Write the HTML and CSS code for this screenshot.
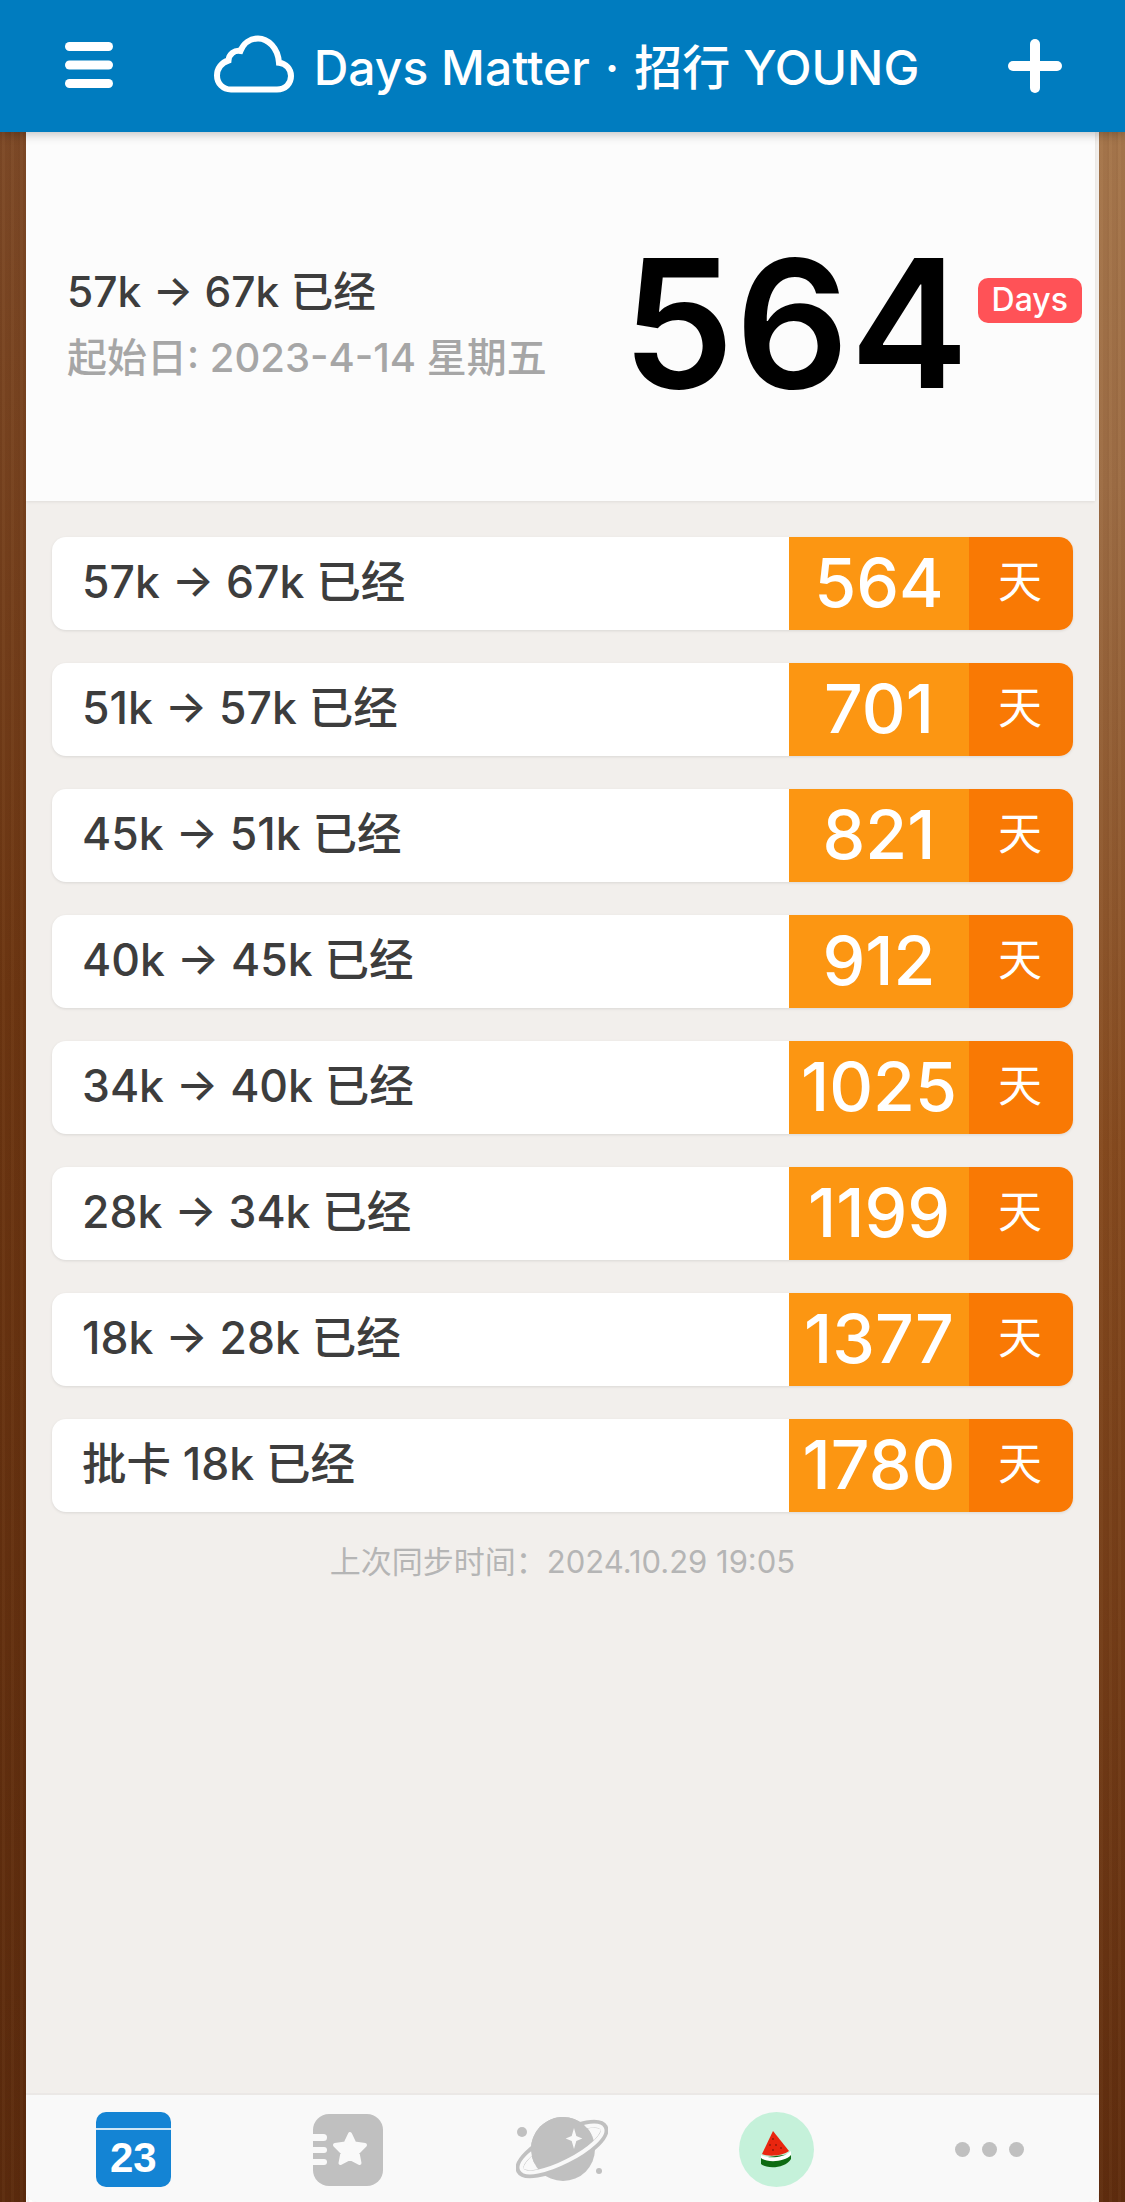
FILE: index.html
```html
<!DOCTYPE html>
<html lang="zh-CN">
<head>
  <meta charset="UTF-8">
  <title>Days Matter</title>
  <link rel="stylesheet" href="styles.css">
</head>
<body>
  <header class="nav">
    <svg class="menu-icon" viewBox="0 0 48 46"><rect x="0" y="0" width="48" height="9" rx="4.5"/><rect x="0" y="18.500" width="48" height="9" rx="4.5"/><rect x="0" y="37" width="48" height="9" rx="4.5"/></svg>
    <div class="nav-title">
      <svg class="cloud-icon" viewBox="0 0 80 58"><path d="M17 54.500h46c8.500 0 14-6 14-13.500 0-7-5-12.500-12-13.300C64 13 54 3.500 44 3.500c-8 0-14.500 5-17.500 12.500-6-1-11.500 3-12 9.500C7.500 27.500 3 33.500 3 40.500 3 48.500 9 54.500 17 54.500z"/></svg>
      <span>Days Matter<span class="nav-dot">·</span>招行 YOUNG</span>
    </div>
    <svg class="plus-icon" viewBox="0 0 54 54"><rect x="22" y="0" width="10" height="54" rx="5"/><rect x="0" y="22" width="54" height="10" rx="5"/></svg>
  </header>

  <main class="sheet">
    <section class="hero">
      <div class="hero-text">
        <div class="hero-title">57k → 67k 已经</div>
        <div class="hero-date">起始日: 2023-4-14 星期五</div>
      </div>
      <div class="hero-count">564</div>
      <div class="hero-badge">Days</div>
    </section>

    <section class="list">
      <div class="row"><div class="row-name">57k → 67k 已经</div><div class="row-num">564</div><div class="row-unit">天</div></div>
      <div class="row"><div class="row-name">51k → 57k 已经</div><div class="row-num">701</div><div class="row-unit">天</div></div>
      <div class="row"><div class="row-name">45k → 51k 已经</div><div class="row-num">821</div><div class="row-unit">天</div></div>
      <div class="row"><div class="row-name">40k → 45k 已经</div><div class="row-num">912</div><div class="row-unit">天</div></div>
      <div class="row"><div class="row-name">34k → 40k 已经</div><div class="row-num">1025</div><div class="row-unit">天</div></div>
      <div class="row"><div class="row-name">28k → 34k 已经</div><div class="row-num">1199</div><div class="row-unit">天</div></div>
      <div class="row"><div class="row-name">18k → 28k 已经</div><div class="row-num">1377</div><div class="row-unit">天</div></div>
      <div class="row"><div class="row-name">批卡 18k 已经</div><div class="row-num">1780</div><div class="row-unit">天</div></div>
      <p class="sync">上次同步时间：2024.10.29 19:05</p>
    </section>

    <nav class="tabs">
      <div class="tab">
        <div class="cal-icon"><span class="cal-num">23</span></div>
      </div>
      <div class="tab">
        <svg class="tab-icon" width="70" height="72" viewBox="0 0 70 72">
          <rect width="70" height="72" rx="16" fill="#c0c0c0"/>
          <rect x="-6" y="20" width="20" height="7" rx="3.5" fill="#f9f9f9"/>
          <rect x="-6" y="33" width="20" height="6" rx="3" fill="#f9f9f9"/>
          <rect x="-6" y="45" width="20" height="6" rx="3" fill="#f9f9f9"/>
          <path d="M37 20l4.500 9.500 10.500 1.500-7.500 7.500 2 10.500-9.500-5-9.500 5 2-10.500-7.500-7.500 10.500-1.500z" fill="#f9f9f9" stroke="#f9f9f9" stroke-width="4" stroke-linejoin="round"/>
        </svg>
      </div>
      <div class="tab">
        <svg class="tab-icon" width="92" height="68" viewBox="0 0 92 68">
          <circle cx="47" cy="33" r="32" fill="#c0c0c0"/>
          <ellipse cx="46" cy="33" rx="47" ry="15" transform="rotate(-27 46 33)" fill="none" stroke="#c0c0c0" stroke-width="8"/>
          <ellipse cx="46" cy="33" rx="45" ry="13" transform="rotate(-27 46 33)" fill="none" stroke="#f9f9f9" stroke-width="4"/>
          <path d="M15 33a32 32 0 0 1 64 0z" transform="rotate(-27 47 33)" fill="#c0c0c0"/>
          <path d="M58 12l2.300 8 6 2.500-6 2.500-2.300 8-2.300-8-6-2.500 6-2.500z" fill="#f9f9f9"/>
          <circle cx="6" cy="16" r="5" fill="#c0c0c0"/>
          <circle cx="83" cy="55" r="3" fill="#c0c0c0"/>
        </svg>
      </div>
      <div class="tab">
        <div class="melon-bg">
          <svg width="32" height="38" viewBox="0 0 32 38">
            <path d="M1 27v6c5 5 24 5 30-5v-5z" fill="#0d6b12"/>
            <path d="M1 24c7 4 23 3 30-4v4c-6 7-24 8-30 3z" fill="#fff"/>
            <path d="M13 0L29 20C23 25 8 26 2 23z" fill="#e9260f"/>
            <g fill="#5a1208"><circle cx="13" cy="8" r=".8"/><circle cx="10" cy="14" r=".8"/><circle cx="16" cy="14" r=".8"/><circle cx="13" cy="19" r=".8"/><circle cx="21" cy="17" r=".8"/></g>
          </svg>
        </div>
      </div>
      <div class="tab">
        <div class="dots"><i></i><i></i><i></i></div>
      </div>
    </nav>
  </main>
</body>
</html>
```

FILE: styles.css
```css
html, body {
  margin: 0;
  padding: 0;
}
body {
  width: 1125px;
  height: 2202px;
  overflow: hidden;
  display: flex;
  flex-direction: column;
  font-family: Inter, "Noto Sans CJK SC", sans-serif;
  background:
    repeating-linear-gradient(90deg, rgba(60,25,5,0.05) 0 2px, rgba(255,220,170,0.03) 2px 5px, rgba(60,25,5,0.02) 5px 9px),
    linear-gradient(180deg, #7f4c2a 0%, #6b3511 45%, #5a2a0d 100%) left top / 26px 100% no-repeat,
    linear-gradient(180deg, #a8794e 0%, #9c6c44 22%, #854a1f 52%, #5e2c0e 100%) right top / 26px 100% no-repeat;
}
.nav {
  height: 132px;
  flex: none;
  position: relative;
  z-index: 2;
  display: flex;
  align-items: center;
  justify-content: space-between;
  padding: 0 63px 0 65px;
  background: #007cbf;
  box-shadow: 0 2px 10px rgba(0,0,0,0.25);
}
.menu-icon {
  width: 48px;
  height: 46px;
  margin-top: -2px;
  fill: #fff;
}
.plus-icon {
  width: 54px;
  height: 54px;
  fill: #fff;
}
.nav-title {
  display: flex;
  align-items: center;
  gap: 20px;
  margin: -4px 0 0 12px;
  color: #fff;
  font-size: 48px;
  font-weight: 500;
  white-space: nowrap;
}
.nav-dot {
  margin: 0 15px;
}
.cloud-icon {
  width: 80px;
  height: 58px;
  fill: none;
  stroke: #fff;
  stroke-width: 6;
}
.sheet {
  flex: 1;
  margin: 0 26px;
  display: flex;
  flex-direction: column;
  background: #f2efec;
  border-radius: 0 0 12px 12px;
  overflow: hidden;
}
.hero {
  height: 369px;
  flex: none;
  display: flex;
  align-items: center;
  margin-right: 4px;
  padding: 0 13px 0 41px;
  background: #fcfcfc;
  box-shadow: 0 1px 3px rgba(0,0,0,0.08);
  box-sizing: border-box;
}
.hero-text {
  flex: 1;
  padding-top: 8px;
}
.hero-title {
  color: #3d3d3d;
  font-size: 42.500px;
  font-weight: 500;
}
.hero-date {
  margin-top: 7px;
  color: #a6a6a6;
  font-size: 40px;
  font-weight: 500;
}
.hero-count {
  padding-top: 14px;
  font-size: 178px;
  font-weight: 600;
  letter-spacing: 1px;
  color: #000;
  line-height: 1;
}
.hero-badge {
  align-self: flex-start;
  margin: 146px 0 0 8px;
  padding: 0 14px;
  height: 45px;
  line-height: 43px;
  border-radius: 10px;
  background: #ff5257;
  color: #fff;
  font-size: 32px;
  font-weight: 500;
}
.list {
  flex: 1;
  display: flex;
  flex-direction: column;
  gap: 33px;
  padding: 36px 26px 0 26px;
}
.row {
  display: flex;
  height: 93px;
  border-radius: 14px;
  overflow: hidden;
  background: #fff;
  box-shadow: 0 1px 3px rgba(0,0,0,0.1);
}
.row-name {
  flex: 1;
  padding-left: 30px;
  line-height: 91px;
  color: #3d3d3d;
  font-size: 44.500px;
  font-weight: 500;
  white-space: nowrap;
}
.row-num {
  width: 180px;
  text-align: center;
  line-height: 90px;
  background: #fc9612;
  color: #fff;
  font-size: 68px;
  font-weight: 500;
}
.row-unit {
  width: 102px;
  padding-right: 2px;
  text-align: center;
  line-height: 91px;
  background: #f97904;
  color: #fff;
  font-size: 44px;
  font-weight: 400;
}
.sync {
  margin: -8px 0 0 0;
  text-align: center;
  color: #b5b5b5;
  font-size: 31px;
  font-weight: 400;
}
.tabs {
  height: 109px;
  flex: none;
  display: flex;
  align-items: center;
  justify-content: space-around;
  padding-top: 2px;
  background: #f9f9f9;
  border-top: 2px solid #ebe8e6;
  box-sizing: border-box;
}
.tab {
  width: 214px;
  display: flex;
  justify-content: center;
}
.cal-icon {
  width: 75px;
  height: 75px;
  box-sizing: border-box;
  padding-top: 21px;
  border-radius: 10px;
  text-align: center;
  background: linear-gradient(180deg, #1484d4 0 16px, #cfe6f7 16px 18px, #1484d4 18px);
}
.cal-num {
  color: #fff;
  font-family: "Liberation Sans", sans-serif;
  font-size: 42px;
  font-weight: 700;
  line-height: 50px;
}
.melon-bg {
  width: 75px;
  height: 75px;
  margin-right: 2px;
  border-radius: 50%;
  display: flex;
  align-items: center;
  justify-content: center;
  background: #c5f1da;
}
.dots {
  display: flex;
  gap: 12px;
  margin-right: 4px;
}
.dots i {
  width: 15px;
  height: 15px;
  border-radius: 50%;
  background: #c0c0c0;
}
```
